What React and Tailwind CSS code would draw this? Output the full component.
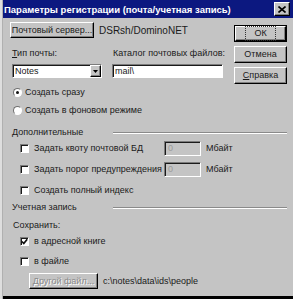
import React from 'react';

const raised =
  'border border-t-white border-l-white border-r-black border-b-black shadow-[inset_-1px_-1px_0_#808080]';
const sunken =
  'border border-t-[#7b7b7b] border-l-[#7b7b7b] border-r-white border-b-white shadow-[inset_1px_1px_0_#1a1a1a]';

const Check = ({ checked }) => (
  <span className={`w-[9px] h-[9px] shrink-0 bg-white flex items-center justify-center ${sunken}`}>
    {checked && (
      <svg width="7" height="7" viewBox="0 0 7 7">
        <path d="M1 3.5 L2.8 5.5 L6.2 1.2" stroke="#111" strokeWidth="1.7" fill="none" />
      </svg>
    )}
  </span>
);

const Radio = ({ checked }) => (
  <span className="w-[9px] h-[9px] shrink-0 rounded-full bg-white border border-t-[#6f6f6f] border-l-[#6f6f6f] border-r-white border-b-white flex items-center justify-center">
    {checked && <span className="w-[3px] h-[3px] rounded-full bg-[#111]" />}
  </span>
);

const GroupHead = ({ children }) => (
  <div className="flex items-center h-[13px]">
    <span className="w-[101px]">{children}</span>
    <span className="flex-1 border-t border-t-[#8a8a8a] border-b border-b-white" />
  </div>
);

const Field = () => (
  <span className={`w-[37px] h-[15px] bg-[#c4c4c4] text-[#9a9a9a] pl-[3px] flex items-center ${sunken}`}>0</span>
);

export default function App() {
  return (
    <div className="w-[293px] h-[299px] flex bg-[#c4c4c4] text-[#1a1a1a] text-[9px] leading-[13px] whitespace-nowrap font-['Liberation_Sans',Arial,sans-serif] overflow-hidden">
      {/* window frame edge */}
      <div className="w-[3px] bg-[#dedede] border-r border-r-[#b0b0b0]" />

      <div className="flex-1 flex flex-col">
        {/* title bar */}
        <div className="h-[18px] bg-[#0c1880] flex items-center justify-between pl-[1px] pr-[3px]">
          <span className="text-white font-bold text-[9.5px]">
            Параметры регистрации (почта/учетная запись)
          </span>
          <span className={`w-[16px] h-[14px] bg-[#c4c4c4] flex items-center justify-center ${raised}`}>
            <svg width="8" height="7" viewBox="0 0 8 7">
              <path d="M0.5 0.5 L7.5 6.5 M7.5 0.5 L0.5 6.5" stroke="#000" strokeWidth="1.6" />
            </svg>
          </span>
        </div>

        <div className="flex-1 flex flex-col pl-[9px] pr-[6px]">
          {/* top section */}
          <div className="flex">
            <div className="flex-1 flex flex-col">
              <div className="flex items-center mt-[4px]">
                <button className={`-ml-[2px] w-[84px] h-[16px] bg-[#c4c4c4] flex items-center justify-center ${raised}`}>
                  Почтовый сервер...
                </button>
                <span className="ml-[5px] text-[10px]">DSRsh/DominoNET</span>
              </div>

              <div className="flex mt-[9px]">
                <span className="w-[101px]"><u>Т</u>ип почты:</span>
                <span>Каталог почтовых файлов:</span>
              </div>

              <div className="flex mt-[4px] gap-[10px]">
                <div className={`w-[90px] h-[14px] bg-white flex items-center justify-between ${sunken}`}>
                  <span className="pl-[2px]">Notes</span>
                  <span className={`w-[11px] h-[12px] bg-[#c4c4c4] flex items-center justify-center ${raised}`}>
                    <svg width="5" height="3" viewBox="0 0 5 3">
                      <path d="M0 0 H5 L2.5 3 Z" fill="#000" />
                    </svg>
                  </span>
                </div>
                <div className={`w-[111px] h-[14px] bg-white flex items-center ${sunken}`}>
                  <span className="pl-[2px]">mail\</span>
                </div>
              </div>

              <div className="flex items-center mt-[8px] gap-[3px] pl-[1px]">
                <Radio checked />
                <span>Создать сразу</span>
              </div>
              <div className="flex items-center mt-[5px] gap-[3px] pl-[1px]">
                <Radio />
                <span>Создать в фоновом режиме</span>
              </div>
            </div>

            <div className="w-[53px] flex flex-col gap-[4px] mt-[7px]">
              <button className="h-[17px] bg-[#c4c4c4] border border-black p-0 flex">
                <span className={`flex-1 flex items-center justify-center ${raised}`}>
                  <span className="px-[8px] outline outline-1 outline-dotted outline-[#333]">ОК</span>
                </span>
              </button>
              <button className={`h-[17px] bg-[#c4c4c4] flex items-center justify-center ${raised}`}>
                Отмена
              </button>
              <button className={`h-[17px] bg-[#c4c4c4] flex items-center justify-center ${raised}`}>
                <span><u>С</u>правка</span>
              </button>
            </div>
          </div>

          {/* Дополнительные */}
          <div className="mt-[9px]">
            <GroupHead>Дополнительные</GroupHead>
          </div>
          <div className="flex items-center h-[15px] mt-[2px] pl-[8px]">
            <Check />
            <span className="ml-[5px] w-[130px]">Задать квоту почтовой БД</span>
            <Field />
            <span className="ml-[5px]">Мбайт</span>
          </div>
          <div className="flex items-center h-[15px] mt-[6px] pl-[8px]">
            <Check />
            <span className="ml-[5px] w-[130px]">Задать порог предупреждения</span>
            <Field />
            <span className="ml-[5px]">Мбайт</span>
          </div>
          <div className="flex items-center h-[13px] mt-[7px] pl-[8px]">
            <Check />
            <span className="ml-[5px]">Создать полный индекс</span>
          </div>

          {/* Учетная запись */}
          <div className="mt-[4px]">
            <GroupHead>Учетная запись</GroupHead>
          </div>
          <div className="mt-[5px] pl-[1px]">Сохранить:</div>
          <div className="flex items-center h-[13px] mt-[3px] pl-[8px]">
            <Check checked />
            <span className="ml-[5px]">в адресной книге</span>
          </div>
          <div className="flex items-center h-[13px] mt-[7px] pl-[8px]">
            <Check />
            <span className="ml-[5px]">в файле</span>
          </div>
          <div className="flex items-center mt-[5px] pl-[17px]">
            <button className={`w-[69px] h-[16px] bg-[#c4c4c4] flex items-center justify-center text-[#8a8a8a] [text-shadow:1px_1px_0_#fff] ${raised}`}>
              Другой файл...
            </button>
            <span className="ml-[5px]">c:\notes\data\ids\people</span>
          </div>
        </div>

        <div className="h-[3px] bg-black" />
      </div>
    </div>
  );
}
